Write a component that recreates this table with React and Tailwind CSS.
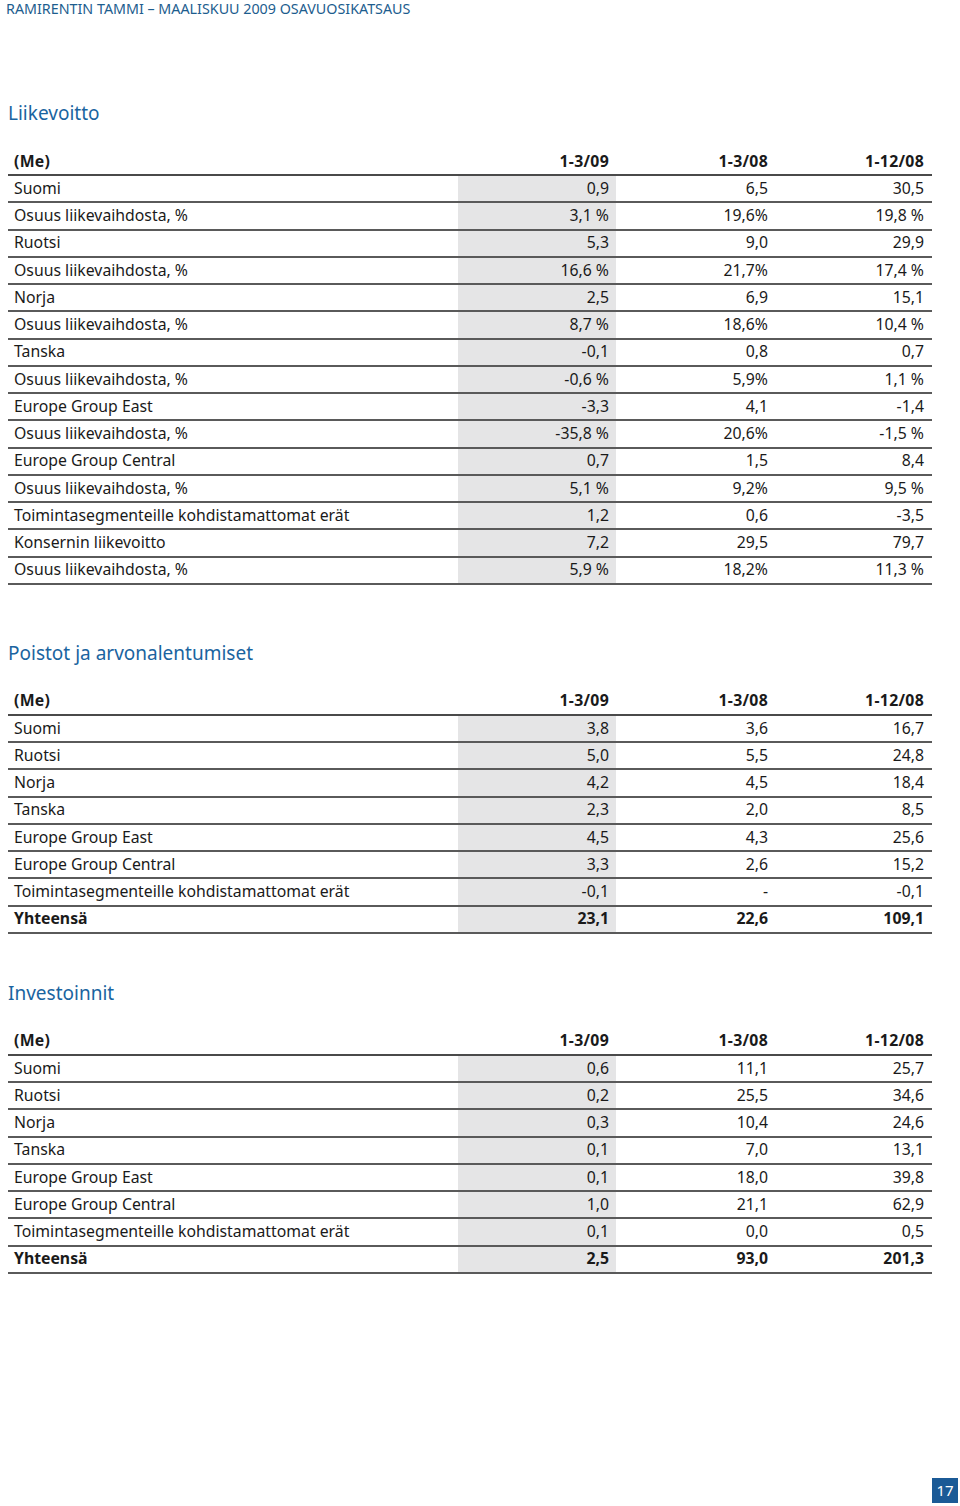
import React from 'react';

const liikevoitto = [
    ['Suomi', '0,9', '6,5', '30,5'],
    ['Osuus liikevaihdosta, %', '3,1 %', '19,6%', '19,8 %'],
    ['Ruotsi', '5,3', '9,0', '29,9'],
    ['Osuus liikevaihdosta, %', '16,6 %', '21,7%', '17,4 %'],
    ['Norja', '2,5', '6,9', '15,1'],
    ['Osuus liikevaihdosta, %', '8,7 %', '18,6%', '10,4 %'],
    ['Tanska', '-0,1', '0,8', '0,7'],
    ['Osuus liikevaihdosta, %', '-0,6 %', '5,9%', '1,1 %'],
    ['Europe Group East', '-3,3', '4,1', '-1,4'],
    ['Osuus liikevaihdosta, %', '-35,8 %', '20,6%', '-1,5 %'],
    ['Europe Group Central', '0,7', '1,5', '8,4'],
    ['Osuus liikevaihdosta, %', '5,1 %', '9,2%', '9,5 %'],
    ['Toimintasegmenteille kohdistamattomat erät', '1,2', '0,6', '-3,5'],
    ['Konsernin liikevoitto', '7,2', '29,5', '79,7'],
    ['Osuus liikevaihdosta, %', '5,9 %', '18,2%', '11,3 %'],
];

const poistot = [
    ['Suomi', '3,8', '3,6', '16,7'],
    ['Ruotsi', '5,0', '5,5', '24,8'],
    ['Norja', '4,2', '4,5', '18,4'],
    ['Tanska', '2,3', '2,0', '8,5'],
    ['Europe Group East', '4,5', '4,3', '25,6'],
    ['Europe Group Central', '3,3', '2,6', '15,2'],
    ['Toimintasegmenteille kohdistamattomat erät', '-0,1', '-', '-0,1'],
    ['Yhteensä', '23,1', '22,6', '109,1'],
];

const investoinnit = [
    ['Suomi', '0,6', '11,1', '25,7'],
    ['Ruotsi', '0,2', '25,5', '34,6'],
    ['Norja', '0,3', '10,4', '24,6'],
    ['Tanska', '0,1', '7,0', '13,1'],
    ['Europe Group East', '0,1', '18,0', '39,8'],
    ['Europe Group Central', '1,0', '21,1', '62,9'],
    ['Toimintasegmenteille kohdistamattomat erät', '0,1', '0,0', '0,5'],
    ['Yhteensä', '2,5', '93,0', '201,3'],
];

const Table = ({ rows, boldLast }) => (
    <div className="w-[924px] ml-2 text-[15.8px] text-[#1a1a1a]">
        <div className="grid grid-cols-[450px_158px_159px_157px] h-[27px] items-center font-bold tracking-[0.3px] border-b-2 border-[#4a4a4a]">
            <div className="pl-[6px]">(Me)</div>
            <div className="text-right pr-[7px]">1-3/09</div>
            <div className="text-right pr-[7px]">1-3/08</div>
            <div className="text-right pr-[8px]">1-12/08</div>
        </div>
        {rows.map((r, i) => {
            const bold = boldLast && i === rows.length - 1;
            return (
                <div
                    key={i}
                    className={`grid grid-cols-[450px_158px_159px_157px] h-[27.25px] border-b-2 border-[#5a5a5a] ${bold ? 'font-bold' : ''}`}
                >
                    <div className="pl-[6px] flex items-center">{r[0]}</div>
                    <div className="bg-[#e5e5e6] flex items-center justify-end pr-[7px]">{r[1]}</div>
                    <div className="flex items-center justify-end pr-[7px]">{r[2]}</div>
                    <div className="flex items-center justify-end pr-[8px]">{r[3]}</div>
                </div>
            );
        })}
    </div>
);

const Heading = ({ children, className }) => (
    <h2 className={`ml-2 text-[19px] leading-[28px] text-[#1a64a0] ${className}`}>{children}</h2>
);

const App = () => {
    return (
        <div className="w-[960px] h-[1506px] bg-white relative font-['Noto_Sans',sans-serif]">
            <div className="pl-[6px] text-[14.3px] leading-[17px] uppercase text-[#1d5d8e]">
                Ramirentin tammi – maaliskuu 2009 osavuosikatsaus
            </div>

            <Heading className="mt-[82px]">Liikevoitto</Heading>
            <div className="mt-[22px]">
                <Table rows={liikevoitto} />
            </div>

            <Heading className="mt-[54px]">Poistot ja arvonalentumiset</Heading>
            <div className="mt-[22px]">
                <Table rows={poistot} boldLast />
            </div>

            <Heading className="mt-[45px]">Investoinnit</Heading>
            <div className="mt-[22px]">
                <Table rows={investoinnit} boldLast />
            </div>

            <div className="absolute left-[932px] top-[1478px] w-[26px] h-[25px] bg-[#1b5a96] text-white text-[15px] flex items-center justify-center">
                17
            </div>
        </div>
    );
};

export default App;
